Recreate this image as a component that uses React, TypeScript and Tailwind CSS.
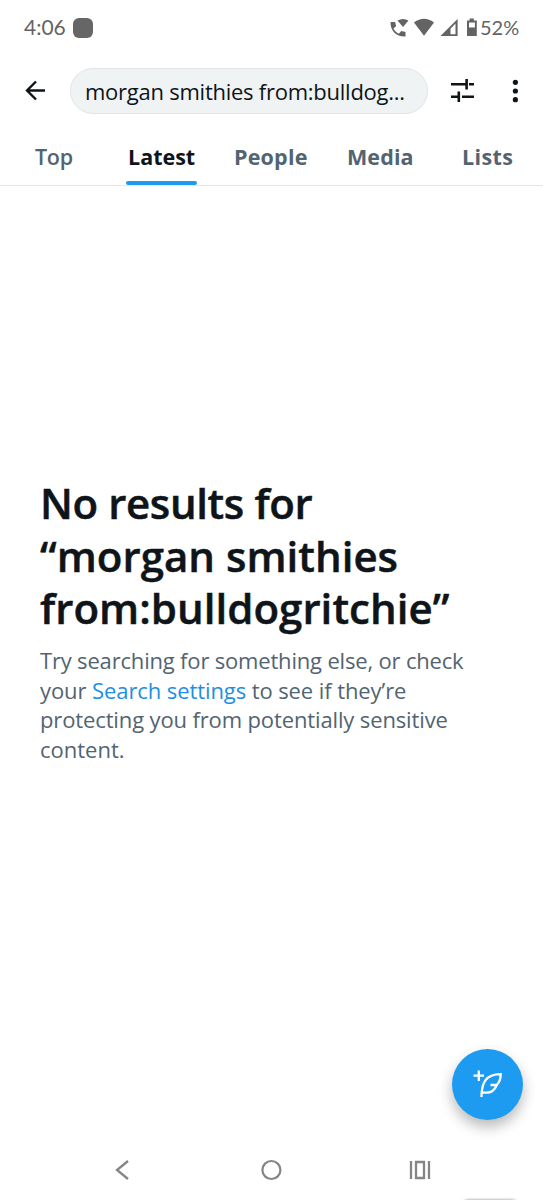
const tabs = [
  { name: "Top", box: "ml-[35px] w-[38px]", text: "font-semibold tracking-[-0.300px]" },
  { name: "Latest", box: "ml-[53px] w-[71px]", text: "pl-[2px] font-bold tracking-[0px]" },
  { name: "People", box: "ml-[37px] w-[75px]", text: "font-bold tracking-[0.200px]" },
  { name: "Media", box: "ml-[38px] w-[67px]", text: "font-bold tracking-[0.100px]" },
  { name: "Lists", box: "ml-[48px] w-[53px]", text: "font-bold tracking-[0.400px]" },
];

function StatusBar() {
  return (
    <div className="flex h-14 shrink-0 items-center text-[#636363] font-['Lato',sans-serif]">
      <span className="ml-6 w-[49px] pb-[2px] whitespace-nowrap text-[21px] leading-7">4:06</span>
      <span className="h-5 w-5 rounded-md bg-[#666]" />
      <svg className="ml-[296px]" width="91" height="22" viewBox="389 17 91 22" fill="#636363">
        <path d="M390.600 22h4.500l1 4.200-2.700 2.400c1.400 2.500 3 4.100 5.400 5.100l2.500-2.600 4.200 1v4.500c-9.200.4-15.400-6-14.900-14.600z" />
        <path d="M397.500 20.500q5.500-3 11 0l-5.500 6.500z" />
        <path d="M414 22.500q10-7.500 20 0l-10 13.300z" />
        <path d="M440.500 36L457.600 19v17zM450.500 34.200h5V23.600L450.500 28.700z" fillRule="evenodd" />
        <path d="M467 20.500h2.600v-1.900h4.200v1.900h3V36h-9.800zM469 22.500v5h5.900v-5z" fillRule="evenodd" />
      </svg>
      <span className="pb-[2px] whitespace-nowrap text-[20px] leading-7">52%</span>
    </div>
  );
}

function SearchHeader() {
  return (
    <div className="flex h-[69px] shrink-0 items-center">
      <svg className="ml-6" width="24" height="24" viewBox="0 0 24 24" fill="none" stroke="#0f1419" strokeWidth="2.400">
        <path d="M21 11.500H3M12 2.500l-9 9 9 9" />
      </svg>
      <div className="ml-[22px] h-[46px] w-[358px] rounded-full border border-[#dfe5e7] bg-[#eff3f4] pl-[14px] text-[22px] leading-[44px] whitespace-nowrap text-[#0f1419]">
        <span className="tracking-[-0.250px]">morgan smithies from:bulldog...</span>
      </div>
      <svg className="ml-[22px]" width="26" height="26" viewBox="450 78 26 26" stroke="#0f1419" strokeWidth="2.600">
        <path d="M451 84.300h15M469 84.300h5M466.600 79v10.500M451 96.800h7M462 96.800h12M458.800 91.500v10.500" />
      </svg>
      <svg className="ml-[34px]" width="12" height="26" viewBox="0 0 12 26" fill="#0f1419">
        <circle cx="5.400" cy="4.300" r="2.600" />
        <circle cx="5.400" cy="13" r="2.600" />
        <circle cx="5.400" cy="21.700" r="2.600" />
      </svg>
    </div>
  );
}

function Tabs() {
  return (
    <nav className="flex h-[61px] shrink-0 border-b border-[#e1e8ec]">
      {tabs.map((tab) => (
        <div key={tab.name} className={`flex shrink-0 flex-col justify-between ${tab.box}`}>
          <span
            className={`pt-[17px] text-[21.500px] leading-[30px] whitespace-nowrap ${tab.text} ${
              tab.name === "Latest" ? "text-[#0f1419]" : "text-[#536471]"
            }`}
          >
            {tab.name}
          </span>
          {tab.name === "Latest" && <span className="h-1 rounded-full bg-[#1d9bf0]" />}
        </div>
      ))}
    </nav>
  );
}

function EmptyState() {
  return (
    <main className="flex-1 pt-[291px] pl-10 whitespace-nowrap">
      <h1 className="text-[42px] leading-[52.700px] font-semibold text-[#0f1419] [-webkit-text-stroke:0.500px_#0f1419]">
        <span className="block tracking-[-0.380px]">No results for</span>
        <span className="block tracking-[0.030px]">“morgan smithies</span>
        <span className="block tracking-[0.050px]">from:bulldogritchie”</span>
      </h1>
      <p className="mt-[11px] text-[22px] leading-[29.600px] text-[#536471]">
        <span className="block tracking-[-0.180px]">Try searching for something else, or check</span>
        <span className="block tracking-[-0.090px]">
          your <a className="text-[#1d8fe0]">Search settings</a> to see if they’re
        </span>
        <span className="block tracking-[-0.130px]">protecting you from potentially sensitive</span>
        <span className="block tracking-[0px]">content.</span>
      </p>
    </main>
  );
}

function ComposeButton() {
  return (
    <button className="absolute top-[1049px] left-[452px] flex h-[71px] w-[71px] items-center justify-center rounded-full bg-[#1d9bf0] shadow-[0_7px_14px_rgba(0,0,0,0.280)]">
      <svg width="32" height="32" viewBox="472 1069 32 32" fill="none" stroke="#fff" strokeWidth="2.300">
        <path d="M478.800 1070.500v10.500M473.500 1075.700h10.500" />
        <path d="M481.500 1097C481.500 1083 485.500 1074.200 500.700 1074.200C500.700 1078.500 499.500 1082 496.800 1085H490.500M496.800 1085C494.500 1090.500 491 1092.700 486.500 1092.700H482" />
      </svg>
    </button>
  );
}

function NavigationBar() {
  return (
    <div className="flex h-[60px] shrink-0 items-center">
      <svg className="ml-[115px]" width="15" height="22" viewBox="0 0 15 22" fill="none" stroke="#858585" strokeWidth="2.300">
        <path d="M13 2L2 11l11 9" />
      </svg>
      <svg className="ml-[130px]" width="22" height="22" viewBox="0 0 22 22" fill="none" stroke="#858585" strokeWidth="2.200">
        <circle cx="11.400" cy="11" r="9" />
      </svg>
      <svg className="ml-[127px]" width="22" height="22" viewBox="0 0 22 22" fill="none" stroke="#858585" strokeWidth="2.300">
        <path d="M2 2v18M20 2v18M7 3h8v16H7z" />
      </svg>
    </div>
  );
}

export default function App() {
  return (
    <div className="relative flex h-[1200px] w-[543px] flex-col overflow-hidden bg-white font-['Open_Sans',sans-serif]">
      <StatusBar />
      <SearchHeader />
      <Tabs />
      <EmptyState />
      <NavigationBar />
      <ComposeButton />
      {/* soft edge peeking up below the navigation bar */}
      <div className="absolute top-[1200px] left-[464px] h-2 w-[52px] rounded-full shadow-[0_0_3px_rgba(0,0,0,0.500)]" />
    </div>
  );
}
